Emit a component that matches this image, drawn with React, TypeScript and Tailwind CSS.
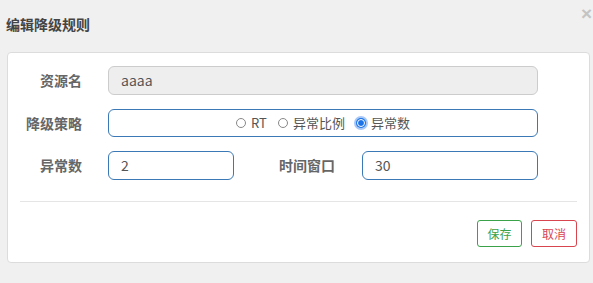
const font = { fontFamily: '"Noto Sans CJK SC", "Liberation Sans", sans-serif' };

const Radio = ({ label, checked }: { label: string; checked?: boolean }) => (
  <label className="flex items-center gap-[5px] text-[13px] text-[#555]">
    {checked ? (
      <span className="w-[10px] h-[10px] rounded-full bg-[#1a73e8] ring-2 ring-[#a8c8f8] flex items-center justify-center">
        <span className="w-[6px] h-[6px] rounded-full bg-[#1a73e8] border border-white box-content" />
      </span>
    ) : (
      <span className="w-[10px] h-[10px] rounded-full border border-[#888] bg-white" />
    )}
    <span>{label}</span>
  </label>
);

export default function App() {
  return (
    <div className="w-[593px] h-[283px] bg-[#f0f0f0] relative" style={font}>
      <div className="h-[52px] flex items-center pl-[6px] pb-[4px]">
        <h4 className="text-[14px] font-bold text-[#444]">编辑降级规则</h4>
      </div>
      <button
        className="absolute right-[1px] top-[4px] text-[19px] leading-none font-bold text-[#c4c4c4]"
        style={{ fontFamily: '"Liberation Sans", sans-serif' }}
      >
        ×
      </button>

      <div className="ml-[7px] w-[583px] h-[211px] bg-white border border-[#dcdcdc] rounded-[4px] pt-[13px] flex flex-col">
        <div className="flex flex-col gap-[14px]">
          <div className="flex items-center">
            <div className="w-[74px] text-right text-[14px] font-bold text-[#666]">资源名</div>
            <div className="ml-[26px] w-[430px] h-[29px] bg-[#eeeeee] border border-[#cccccc] rounded-[6px] flex items-center pl-[12px] text-[14px] text-[#555]">
              aaaa
            </div>
          </div>
          <div className="flex items-center">
            <div className="w-[74px] text-right text-[14px] font-bold text-[#666]">降级策略</div>
            <div className="ml-[26px] w-[430px] h-[28px] border border-[#3a79b5] rounded-[6px] flex items-center justify-center gap-[11px]">
              <Radio label="RT" />
              <Radio label="异常比例" />
              <Radio label="异常数" checked />
            </div>
          </div>
          <div className="flex items-center">
            <div className="w-[74px] text-right text-[14px] font-bold text-[#666]">异常数</div>
            <div className="ml-[26px] w-[126px] h-[29px] border border-[#3a79b5] rounded-[6px] flex items-center pl-[12px] text-[14px] text-[#555]">
              2
            </div>
            <div className="w-[101px] text-right text-[14px] font-bold text-[#666]">时间窗口</div>
            <div className="ml-[27px] w-[176px] h-[29px] border border-[#3a79b5] rounded-[6px] flex items-center pl-[12px] text-[14px] text-[#555]">
              30
            </div>
          </div>
        </div>

        <div className="mt-[21px] mx-[12px] border-t border-[#e5e5e5]" />

        <div className="mt-[18px] mr-[12px] flex justify-end gap-[9px]">
          <button className="w-[45px] h-[27px] border border-[#3aa34a] rounded-[3px] text-[12px] text-[#3aa34a]">
            保存
          </button>
          <button className="w-[46px] h-[27px] border border-[#d9454f] rounded-[3px] text-[12px] text-[#d9454f]">
            取消
          </button>
        </div>
      </div>
    </div>
  );
}
